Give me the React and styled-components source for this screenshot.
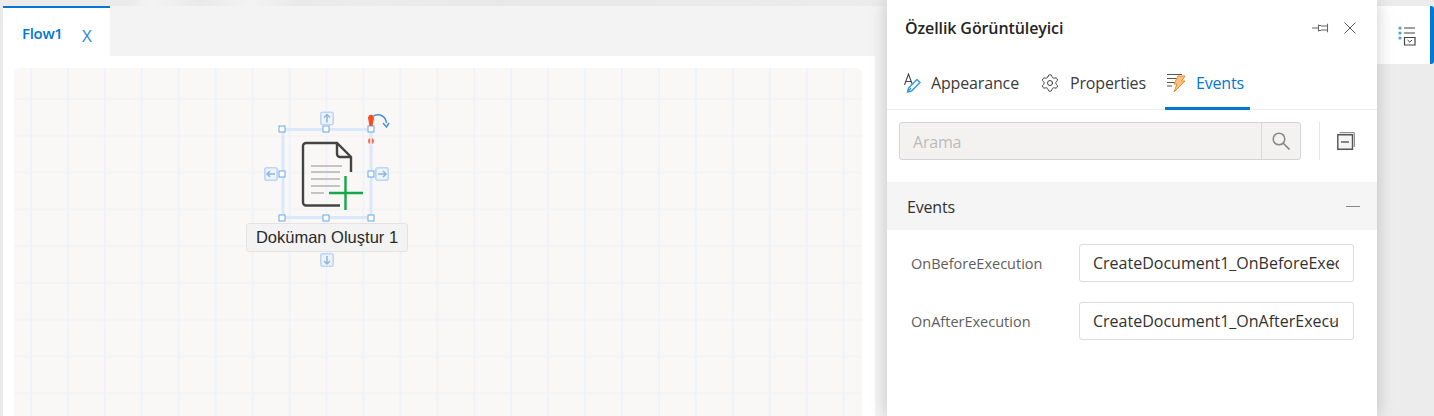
import React from "react";
import styled, { createGlobalStyle } from "styled-components";
import { Settings } from "lucide-react";

const Global = createGlobalStyle`
  html, body { margin: 0; padding: 0; height: 100%; overflow: hidden; }
  body { background: #ececec; font-family: "Open Sans", "Liberation Sans", sans-serif; }
  #root { height: 100%; }
`;

const Page = styled.div`
  position: relative;
  width: 1434px;
  height: 416px;
  display: flex;
  overflow: hidden;
  background: linear-gradient(90deg, #ebebeb 0, #ebebeb 130px, #f4f4f4 150px, #e9e9e9 200px, #f3f3f3 250px, #e9e9e9 300px, #ececec 360px, #e8e8e8 500px, #ececec 900px);
`;

const Main = styled.main`
  width: 884px;
  margin: 6px 0 0 3px;
  display: flex;
  flex-direction: column;
  background: #f3f3f3;
`;

const TabStrip = styled.div`
  height: 50px;
  display: flex;
  flex-shrink: 0;
`;

const FlowTab = styled.div`
  width: 107px;
  box-sizing: border-box;
  border-top: 2px solid #0078d4;
  background: #fff;
  display: flex;
  align-items: flex-start;
  padding: 14px 0 0 19px;
  color: #0078d4;
`;

const FlowName = styled.span`
  width: 60px;
  font-size: 15px;
  line-height: 22px;
  font-weight: 600;
  letter-spacing: -0.3px;
`;

const FlowClose = styled.span`
  font-size: 17px;
  font-weight: 400;
  line-height: 22px;
  margin-top: 3px;
  color: #2b88d8;
`;

const Content = styled.div`
  flex: 1;
  margin-right: 12px;
  background: #fff;
  padding: 12px 13px 0 11px;
  display: flex;
`;

const Canvas = styled.div`
  position: relative;
  flex: 1;
  border-radius: 6px 6px 0 0;
  background-color: #f9f8f7;
  background-image:
    linear-gradient(90deg, #eff3f9 2px, transparent 2px),
    linear-gradient(180deg, #f4f4f4 2px, transparent 2px);
  background-size: 36.95px 36.8px;
  background-position: 16px 30px;
`;

const Node = styled.div`
  position: absolute;
  left: 232px;
  top: 42px;
  width: 162px;
  height: 160px;
`;

const NodeArt = styled.svg`
  position: absolute;
  left: 0;
  top: 0;
  display: block;
`;

const NodeLabel = styled.div`
  position: absolute;
  left: 0;
  top: 113px;
  width: 162px;
  height: 29px;
  box-sizing: border-box;
  background: #f3f3f3;
  border: 1px solid #e3e3e3;
  border-radius: 3px;
  font-family: "Liberation Sans", Arial, sans-serif;
  font-size: 16.5px;
  line-height: 27px;
  text-align: center;
  color: #2a2a2a;
  white-space: nowrap;
`;

const Panel = styled.aside`
  position: relative;
  z-index: 2;
  width: 490px;
  flex-shrink: 0;
  background: #fff;
  box-shadow: 0 0 16px rgba(0, 0, 0, 0.2);
  display: flex;
  flex-direction: column;
`;

const PanelHead = styled.header`
  height: 56px;
  display: flex;
  align-items: center;
  padding: 0 21px 0 18px;
  flex-shrink: 0;
`;

const PanelTitle = styled.h2`
  flex: 1;
  margin: 0;
  font-size: 16px;
  font-weight: 600;
  letter-spacing: -0.1px;
  color: #252423;
`;

const HeadActions = styled.div`
  display: flex;
  align-items: center;
  gap: 15px;
`;

const Tabs = styled.nav`
  height: 54px;
  flex-shrink: 0;
  display: flex;
  align-items: stretch;
  border-bottom: 1px solid #edebe9;
  box-sizing: border-box;
  padding-left: 17px;
  gap: 21px;
`;

const Tab = styled.div`
  display: flex;
  align-items: center;
  gap: 10px;
  padding: 2px ${(p) => (p.$active ? "6px" : "0")} 0 ${(p) => (p.$active ? "2px" : "0")};
  margin-bottom: -1px;
  margin-left: ${(p) => (p.$active ? "-2px" : "0")};
  font-size: 16px;
  letter-spacing: -0.15px;
  color: ${(p) => (p.$active ? "#0078d4" : "#3b3a39")};
  border-bottom: 3px solid ${(p) => (p.$active ? "#0078d4" : "transparent")};
  & > svg { flex-shrink: 0; }
`;

const SearchRow = styled.div`
  display: flex;
  align-items: center;
  padding: 12px 0 22px 12px;
  flex-shrink: 0;
`;

const SearchBox = styled.div`
  width: 402px;
  height: 38px;
  box-sizing: border-box;
  display: flex;
  background: #f3f2f1;
  border: 1px solid #d2d6dc;
  border-radius: 3px;
`;

const SearchField = styled.div`
  flex: 1;
  padding-left: 13px;
  font-size: 16px;
  line-height: 38px;
  letter-spacing: -0.2px;
  color: #bdbbb9;
`;

const SearchButton = styled.div`
  width: 38px;
  border-left: 1px solid #d8d8d8;
  display: flex;
  align-items: center;
  justify-content: center;
`;

const Divider = styled.div`
  width: 1px;
  height: 38px;
  margin: 0 17px 0 18px;
  background: #e6e6e6;
`;

const SectionHead = styled.div`
  height: 48px;
  box-sizing: border-box;
  flex-shrink: 0;
  display: flex;
  align-items: center;
  justify-content: space-between;
  padding: 2px 17px 0 20px;
  background: #f5f5f5;
  font-size: 16px;
  letter-spacing: -0.2px;
  color: #323130;
`;

const Minus = styled.span`
  width: 14px;
  height: 1px;
  margin-top: -2px;
  background: #8a8886;
`;

const Rows = styled.div`
  display: flex;
  flex-direction: column;
  gap: 20px;
  padding: 14px 23px 0 24px;
`;

const Row = styled.div`
  display: flex;
  align-items: center;
  height: 38px;
`;

const RowLabel = styled.div`
  width: 168px;
  font-size: 14.5px;
  color: #605e5c;
`;

const RowValue = styled.div`
  position: relative;
  width: 275px;
  height: 38px;
  box-sizing: border-box;
  padding: 0 14px 0 13px;
  border: 1px solid #dcdcdc;
  border-radius: 3px;
  font-size: 16px;
  line-height: 36px;
  color: #323130;
`;

const RowText = styled.div`
  overflow: hidden;
  white-space: nowrap;
`;

const RowCaret = styled.svg`
  position: absolute;
  right: 17px;
  top: 17px;
`;

const Rail = styled.div`
  flex: 1;
  height: 58px;
  margin-top: 6px;
  box-sizing: border-box;
  display: flex;
  align-items: flex-start;
  padding: 20px 0 0 21px;
  background: #fff;
  border-right: 4px solid #0078d4;
  border-radius: 0 3px 3px 0;
`;

const ArrowBtn = ({ x, y, d }) => (
  <g transform={`translate(${x} ${y})`}>
    <rect x="-6.2" y="-6.2" width="12.4" height="12.4" rx="2" fill="#eef4fc" stroke="#bcd6f5" strokeWidth="1.6" />
    <path d={d} fill="none" stroke="#8fb4e0" strokeWidth="1.5" />
  </g>
);

const Handle = ({ x, y }) => (
  <rect x={x - 3} y={y - 3} width="6" height="6" fill="#fff" stroke="#6ba5e7" strokeWidth="1" />
);

const NodeGraphic = () => (
  <NodeArt width="162" height="160" viewBox="246 110 162 160">
    <rect x="283" y="129.5" width="88" height="88" fill="none" stroke="#dbe8fa" strokeWidth="3" />
    <path d="M340 205.500H306a3 3 0 0 1-3-3V146a3 3 0 0 1 3-3h31l14 14v15" fill="none" stroke="#444" strokeWidth="2.4" />
    <path d="M337 143v11a3 3 0 0 0 3 3h11" fill="none" stroke="#444" strokeWidth="2.4" />
    <path d="M311 166h31M311 172h29M311 179h29M311 186h29M311 193h13" stroke="#c4c4c4" strokeWidth="2" />
    <path d="M329 193h34M345.500 176v34" stroke="#14a84b" strokeWidth="2.400" />
    {[[282, 129], [326, 129], [371, 129], [282, 174], [371, 174], [282, 218], [326, 218], [371, 218]].map(([x, y]) => (
      <Handle key={`${x}-${y}`} x={x} y={y} />
    ))}
    <ArrowBtn x={327} y={118.500} d="M0 4V-4M-3-1 0-4 3-1" />
    <ArrowBtn x={271} y={174} d="M4 0H-4M-1-3-4 0-1 3" />
    <ArrowBtn x={382} y={174} d="M-4 0H4M1-3 4 0 1 3" />
    <ArrowBtn x={327} y={260} d="M0-4V4M-3 1 0 4 3 1" />
    <path d="M368 118c0-4.500 6-4.500 6 0l-1.500 8h-3z" fill="#f4511e" />
    <ellipse cx="371" cy="141" rx="3" ry="3" fill="#f2705a" />
    <rect x="370.300" y="137.500" width="1.400" height="7" fill="#fff" />
    <path d="M373.500 116c6-3 12 0 13 7" fill="none" stroke="#4a90d9" strokeWidth="1.500" />
    <path d="M383 123l3.500 4 2.500-4" fill="none" stroke="#4a90d9" strokeWidth="1.500" />
  </NodeArt>
);

const PinIcon = () => (
  <svg width="17" height="10" viewBox="0 0 17 10">
    <path d="M0 5h6M6.500 1.500v7M6.500 2.500h2.500M6.500 7.500h2.500M9 3h6M9 7h6M15.500.800v8.400" fill="none" stroke="#666" strokeWidth="1.100" />
  </svg>
);

const CloseIcon = () => (
  <svg width="12" height="12" viewBox="0 0 12 12">
    <path d="M.5.500l11 11M11.500.500l-11 11" stroke="#555" strokeWidth="1" />
  </svg>
);

const AppearanceIcon = () => (
  <svg width="17" height="20" viewBox="0 0 17 20">
    <path d="M.5 12 4.500 1 8.500 12M2 8.500h5" fill="none" stroke="#444" strokeWidth="1.100" />
    <path d="M3.500 19l1-4L13 6.500l3 3L7.500 18z" fill="#fff" stroke="#3a96dd" strokeWidth="1.400" />
    <path d="M4 18.500l3-3.500" stroke="#3a96dd" strokeWidth="1.200" />
  </svg>
);

const EventsIcon = () => (
  <svg width="19" height="20" viewBox="0 0 19 20">
    <path d="M0 1.500h15M0 5.500h11M0 9.500h8M0 13h5" stroke="#555" strokeWidth="1.100" />
    <path d="M11 3h7l-3.500 5H18L7 19l3-8H7z" fill="#fbc28a" stroke="#ef8a2b" strokeWidth="1" />
  </svg>
);

const SearchIcon = () => (
  <svg width="18" height="18" viewBox="0 0 18 18">
    <circle cx="7" cy="7" r="5.800" fill="none" stroke="#8a8886" strokeWidth="1.500" />
    <path d="M11 11l6.500 6.500" stroke="#8a8886" strokeWidth="1.700" />
  </svg>
);

const CollapseIcon = () => (
  <svg width="18" height="18" viewBox="0 0 18 18">
    <path d="M2.500.700H17.300V15" fill="none" stroke="#777" strokeWidth="1" />
    <path d="M.800 2.800H15.500V17.200H.800z" fill="#f4f4f4" stroke="#555" strokeWidth="1.400" />
    <path d="M4 10h8" stroke="#555" strokeWidth="1.400" />
  </svg>
);

const RailIcon = () => (
  <svg width="18" height="20" viewBox="0 0 18 20">
    <circle cx="2" cy="2" r="1.600" fill="#4a9fe0" />
    <circle cx="2" cy="7" r="1.600" fill="#4a9fe0" />
    <circle cx="2" cy="12" r="1.600" fill="#4a9fe0" />
    <path d="M6 2h11M6 7h11" stroke="#444" strokeWidth="1.200" />
    <path d="M6.500 11.500h10.500v7.500H6.500z" fill="#fff" stroke="#444" strokeWidth="1.200" />
    <path d="M9.500 14l2.300 2 2.300-2" fill="none" stroke="#444" strokeWidth="1" />
  </svg>
);

const Caret = () => (
  <RowCaret width="7" height="5" viewBox="0 0 7 5">
    <path d="M.500 1l3 3 3-3" fill="none" stroke="#555" strokeWidth="1" />
  </RowCaret>
);

export default function App() {
  return (
    <Page>
      <Global />
      <Main>
        <TabStrip>
          <FlowTab>
            <FlowName>Flow1</FlowName>
            <FlowClose>X</FlowClose>
          </FlowTab>
        </TabStrip>
        <Content>
          <Canvas>
            <Node>
              <NodeGraphic />
              <NodeLabel>Doküman Oluştur 1</NodeLabel>
            </Node>
          </Canvas>
        </Content>
      </Main>
      <Panel>
        <PanelHead>
          <PanelTitle>Özellik Görüntüleyici</PanelTitle>
          <HeadActions>
            <PinIcon />
            <CloseIcon />
          </HeadActions>
        </PanelHead>
        <Tabs>
          <Tab><AppearanceIcon />Appearance</Tab>
          <Tab><Settings size={20} strokeWidth={1.2} color="#444" />Properties</Tab>
          <Tab $active><EventsIcon />Events</Tab>
        </Tabs>
        <SearchRow>
          <SearchBox>
            <SearchField>Arama</SearchField>
            <SearchButton><SearchIcon /></SearchButton>
          </SearchBox>
          <Divider />
          <CollapseIcon />
        </SearchRow>
        <SectionHead>Events<Minus /></SectionHead>
        <Rows>
          <Row>
            <RowLabel>OnBeforeExecution</RowLabel>
            <RowValue><RowText>CreateDocument1_OnBeforeExecution</RowText><Caret /></RowValue>
          </Row>
          <Row>
            <RowLabel>OnAfterExecution</RowLabel>
            <RowValue><RowText>CreateDocument1_OnAfterExecution</RowText><Caret /></RowValue>
          </Row>
        </Rows>
      </Panel>
      <Rail><RailIcon /></Rail>
    </Page>
  );
}
